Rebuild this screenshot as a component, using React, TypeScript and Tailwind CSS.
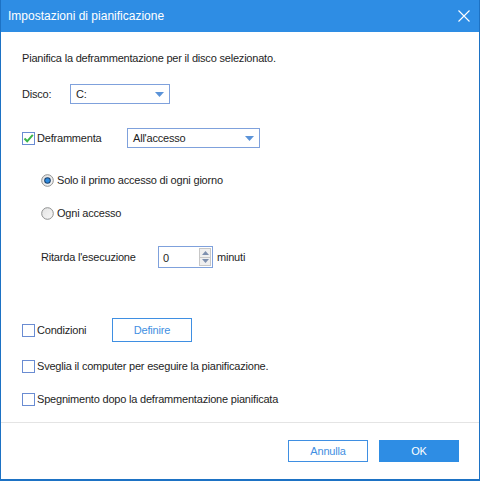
import React from 'react';

const font = { fontFamily: '"Liberation Sans", Arial, sans-serif' };

const Checkbox: React.FC<{ checked?: boolean }> = ({ checked }) => (
  <span className="relative inline-block w-[13px] h-[13px] border border-[#6a8cd2] bg-white shrink-0">
    {checked && (
      <svg className="absolute -left-[1px] -top-[1px]" width="13" height="13" viewBox="0 0 13 13">
        <path d="M2.5 6.5 L5.2 9.3 L10.8 2.8" fill="none" stroke="#3bb54a" strokeWidth="2" />
      </svg>
    )}
  </span>
);

const Radio: React.FC<{ checked?: boolean }> = ({ checked }) => (
  <svg width="13" height="13" viewBox="0 0 13 13" className="shrink-0">
    <defs>
      <linearGradient id={checked ? 'rg1' : 'rg0'} x1="0" y1="0" x2="1" y2="1">
        <stop offset="0" stopColor="#e2e2e2" />
        <stop offset="1" stopColor="#f8f8f8" />
      </linearGradient>
    </defs>
    <circle cx="6.5" cy="6.5" r="5.8" fill={`url(#${checked ? 'rg1' : 'rg0'})`} stroke="#8e8f8f" strokeWidth="1" />
    {checked && (
      <>
        <circle cx="6.5" cy="6.5" r="3.3" fill="#1a3f6a" />
        <circle cx="6.5" cy="6.5" r="2.3" fill="#2f8ce0" />
      </>
    )}
  </svg>
);

const Arrow = () => (
  <svg width="9" height="5" viewBox="0 0 9 5">
    <path d="M0 0 H9 L4.5 5 Z" fill="#5b93d8" />
  </svg>
);

const Select: React.FC<{ value: string; width: string }> = ({ value, width }) => (
  <div className={`flex items-center justify-between h-[20px] border border-[#7fa1dc] bg-white pl-[5px] pr-[5px] ${width}`}>
    <span>{value}</span>
    <Arrow />
  </div>
);

export default function App() {
  return (
    <div
      style={font}
      className="w-[480px] h-[481px] flex flex-col bg-white border-x border-b-2 border-[#1d72c4] text-[11px] tracking-[-0.2px] text-[#1e1e1e]"
    >
      {/* title bar */}
      <div className="h-[32px] shrink-0 bg-[#2e8de4] flex items-center justify-between pl-[7px] pr-[9px] text-white text-[12px] tracking-normal">
        <span>Impostazioni di pianificazione</span>
        <svg width="12" height="12" viewBox="0 0 12 12">
          <path d="M0.5 0.5 L11.5 11.5 M11.5 0.5 L0.5 11.5" stroke="#ffffff" strokeWidth="1.1" />
        </svg>
      </div>

      <div className="flex-1 flex flex-col pl-[21px]">
        <div className="h-[20px] mt-[16px] flex items-center">
          Pianifica la deframmentazione per il disco selezionato.
        </div>

        <div className="h-[20px] mt-[16px] flex items-center">
          <span className="w-[48px]">Disco:</span>
          <Select value="C:" width="w-[100px]" />
        </div>

        <div className="h-[20px] mt-[24px] flex items-center">
          <Checkbox checked />
          <span className="ml-[2px] w-[90px]">Deframmenta</span>
          <Select value="All'accesso" width="w-[133px]" />
        </div>

        <div className="pl-[19px] flex flex-col">
          <div className="h-[20px] mt-[22px] flex items-center gap-[3px]">
            <Radio checked />
            <span>Solo il primo accesso di ogni giorno</span>
          </div>
          <div className="h-[20px] mt-[13px] flex items-center gap-[3px]">
            <Radio />
            <span>Ogni accesso</span>
          </div>
          <div className="h-[22px] mt-[23px] flex items-center">
            <span className="w-[117px]">Ritarda l'esecuzione</span>
            <div className="flex items-center h-[22px] w-[55px] border border-[#7fa1dc] bg-white pl-[4px] pr-[1px] justify-between">
              <span className="pt-[2px]">0</span>
              <div className="flex flex-col w-[12px] h-[18px] border border-[#c7c7c7] bg-[#efefef]">
                <div className="flex-1 flex items-center justify-center border-b border-[#c7c7c7]">
                  <svg width="7" height="4" viewBox="0 0 7 4"><path d="M0 4 H7 L3.5 0 Z" fill="#7d8fae" /></svg>
                </div>
                <div className="flex-1 flex items-center justify-center">
                  <svg width="7" height="4" viewBox="0 0 7 4"><path d="M0 0 H7 L3.5 4 Z" fill="#7d8fae" /></svg>
                </div>
              </div>
            </div>
            <span className="ml-[4px]">minuti</span>
          </div>
        </div>

        <div className="h-[24px] mt-[50px] flex items-center">
          <Checkbox />
          <span className="ml-[2px] w-[75px]">Condizioni</span>
          <button className="h-[24px] w-[80px] border border-[#3f8fe2] text-[#3f8fe2] bg-white">Definire</button>
        </div>

        <div className="h-[20px] mt-[14px] flex items-center">
          <Checkbox />
          <span className="ml-[2px]">Sveglia il computer per eseguire la pianificazione.</span>
        </div>

        <div className="h-[20px] mt-[13px] flex items-center">
          <Checkbox />
          <span className="ml-[2px]">Spegnimento dopo la deframmentazione pianificata</span>
        </div>
      </div>

      {/* footer */}
      <div className="h-[57px] shrink-0 border-t border-[#e4e4e4] flex items-start justify-end gap-[11px] pt-[17px] pr-[20px]">
        <button className="h-[22px] w-[80px] border border-[#3f8fe2] text-[#3f8fe2] bg-white">Annulla</button>
        <button className="h-[22px] w-[80px] bg-[#2e8de4] text-white">OK</button>
      </div>
    </div>
  );
}
